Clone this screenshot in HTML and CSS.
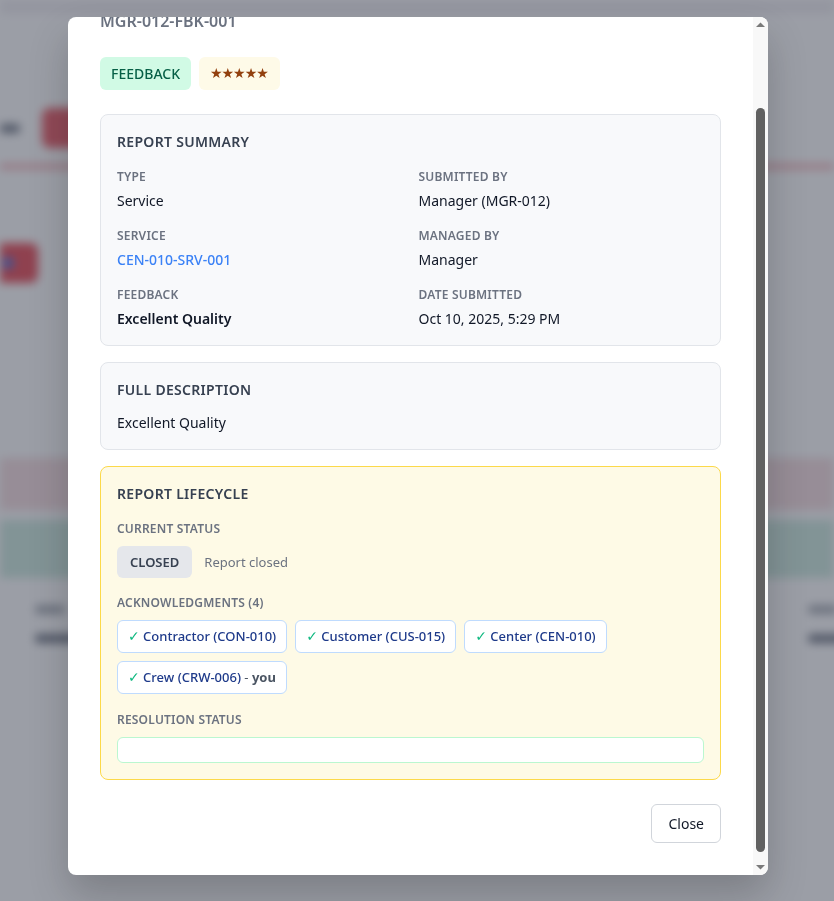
FILE: index.html
```html
<!DOCTYPE html>
<html lang="en">
<head>
<meta charset="utf-8">
<title>Report Details</title>
<link rel="stylesheet" href="styles.css">
</head>
<body>
<div class="page" aria-hidden="true">
  <div class="page-top"></div>
  <div class="page-toolbar"><span class="blob blob-label"></span><span class="page-btn"></span></div>
  <div class="page-rule"></div>
  <div class="page-fab"><span class="fab-dot"></span></div>
  <div class="page-band band-red"></div>
  <div class="page-band band-green"></div>
  <div class="page-stats">
    <div class="stat"><span class="blob short"></span><span class="blob"></span></div>
    <div class="stat"><span class="blob short"></span><span class="blob"></span></div>
  </div>
</div>

<div class="overlay">
  <div class="modal" role="dialog" aria-label="Report Details">
    <div class="modal-viewport">
      <div class="modal-body">
        <header class="modal-head">
          <h2 class="modal-title">Report Details</h2>
          <div class="report-id">MGR-012-FBK-001</div>
        </header>

        <div class="badges">
          <span class="badge badge-type">FEEDBACK</span>
          <span class="badge badge-stars">★★★★★</span>
        </div>

        <section class="card">
          <h3 class="card-title">REPORT SUMMARY</h3>
          <div class="summary-grid">
            <div class="field"><div class="label">TYPE</div><div class="value">Service</div></div>
            <div class="field"><div class="label">SUBMITTED BY</div><div class="value">Manager (MGR-012)</div></div>
            <div class="field"><div class="label">SERVICE</div><div class="value link">CEN-010-SRV-001</div></div>
            <div class="field"><div class="label">MANAGED BY</div><div class="value">Manager</div></div>
            <div class="field"><div class="label">FEEDBACK</div><div class="value strong">Excellent Quality</div></div>
            <div class="field"><div class="label">DATE SUBMITTED</div><div class="value">Oct 10, 2025, 5:29 PM</div></div>
          </div>
        </section>

        <section class="card">
          <h3 class="card-title desc-title">FULL DESCRIPTION</h3>
          <p class="desc">Excellent Quality</p>
        </section>

        <section class="card card-lifecycle">
          <h3 class="card-title">REPORT LIFECYCLE</h3>
          <div class="life-section">
            <div class="label">CURRENT STATUS</div>
            <div class="status-row">
              <span class="status-badge">CLOSED</span>
              <span class="status-note">Report closed</span>
            </div>
          </div>
          <div class="life-section ack-section">
            <div class="label">ACKNOWLEDGMENTS (4)</div>
            <div class="chips">
              <span class="chip"><span class="check">✓</span> Contractor (CON-010)</span>
              <span class="chip"><span class="check">✓</span> Customer (CUS-015)</span>
              <span class="chip"><span class="check">✓</span> Center (CEN-010)</span>
              <span class="chip"><span class="check">✓</span> Crew (CRW-006) <span class="you">- <b>you</b></span></span>
            </div>
          </div>
          <div class="life-section res-section">
            <div class="label">RESOLUTION STATUS</div>
            <div class="resolution-box"></div>
          </div>
        </section>

        <div class="actions">
          <button class="btn-close" type="button">Close</button>
        </div>
      </div>
    </div>

    <div class="scrollbar" aria-hidden="true">
      <svg class="sb-arrow" width="15" height="15" viewBox="0 0 15 15"><polygon points="3,10 12,10 7.5,5.5" fill="#7a7a7a"/></svg>
      <div class="sb-track"><div class="sb-thumb"></div></div>
      <svg class="sb-arrow" width="15" height="15" viewBox="0 0 15 15"><polygon points="3,5 12,5 7.5,9.5" fill="#7a7a7a"/></svg>
    </div>
  </div>
</div>
</body>
</html>
```

FILE: styles.css
```css
* { box-sizing: border-box; }

html, body {
  margin: 0;
  height: 901px;
  overflow: hidden;
}

body {
  font-family: "Noto Sans", "Segoe UI", "Open Sans", sans-serif;
  background: #ffffff;
  color: #111827;
}

/* ---------- blurred page behind the dialog ---------- */
.page {
  filter: blur(5px);
  display: flex;
  flex-direction: column;
}

.page-top {
  height: 14px;
  background: #f1eef2;
}

.page-toolbar {
  display: flex;
  align-items: center;
  gap: 22px;
  margin-top: 92px;
  height: 44px;
}

.blob {
  display: block;
  height: 9px;
  width: 60px;
  border-radius: 4px;
  background: #6b7280;
}

.blob-label { width: 20px; }

.page-btn {
  display: block;
  width: 160px;
  height: 40px;
  border-radius: 8px;
  background: #ea5560;
}

.page-rule {
  height: 5px;
  margin-top: 14px;
  background: #f3a6ad;
}

.page-fab {
  margin-top: 74px;
  width: 38px;
  height: 40px;
  border-radius: 0 8px 8px 0;
  background: #e74450;
  display: flex;
  align-items: center;
  padding-left: 2px;
}

.fab-dot {
  display: block;
  width: 12px;
  height: 12px;
  border-radius: 50%;
  background: #4f6fd8;
}

.page-band { height: 52px; }

.band-red {
  margin-top: 175px;
  background: #f6dde0;
}

.band-green {
  margin-top: 10px;
  height: 58px;
  background: #cdeadf;
}

.page-stats {
  display: flex;
  justify-content: space-between;
  padding: 27px 0 0 35px;
}

.stat {
  display: flex;
  flex-direction: column;
  gap: 20px;
  width: 60px;
}

.stat:last-child { width: 26px; }

.stat .short { width: 30px; background: #a3a8b0; }

/* ---------- overlay & modal ---------- */
.overlay {
  position: fixed;
  inset: 0;
  background: rgba(55, 62, 78, 0.5);
  display: flex;
  justify-content: center;
  align-items: flex-start;
  padding: 17px 0 0 2px;
}

.modal {
  width: 700px;
  height: 858px;
  background: #ffffff;
  border-radius: 8px;
  overflow: hidden;
  display: flex;
  box-shadow: 0 20px 40px rgba(0, 0, 0, 0.2);
}

.modal-viewport {
  flex: 1;
  min-width: 0;
  overflow: hidden;
  display: flex;
  flex-direction: column-reverse;
}

/* scrollbar */
.scrollbar {
  width: 15px;
  flex-shrink: 0;
  background: #f8f8f8;
  display: flex;
  flex-direction: column;
}

.sb-arrow {
  display: block;
  flex-shrink: 0;
}

.sb-track {
  flex: 1;
  padding-top: 76px;
}

.sb-thumb {
  width: 9px;
  height: 744px;
  margin-left: 3px;
  border-radius: 5px;
  background: #616161;
}

.modal-body {
  flex-shrink: 0;
  padding: 32px;
  display: flex;
  flex-direction: column;
}

.modal-head {
  display: flex;
  flex-direction: column;
  gap: 8px;
}

.modal-title {
  margin: 0;
  font-size: 22px;
  line-height: 32px;
  font-weight: 700;
  color: #111827;
}

.report-id {
  font-size: 16px;
  line-height: 24px;
  font-weight: 600;
  color: #6b7280;
}

/* ---------- badges ---------- */
.badges {
  display: flex;
  gap: 8px;
  margin-top: 24px;
}

.badge {
  display: inline-block;
  padding: 6px 12px;
  line-height: 21px;
  border-radius: 6px;
  font-size: 14px;
}

.badge-type {
  background: #d1fae5;
  color: #065f46;
  font-weight: 500;
  padding: 6px 11px;
}

.badge-stars {
  background: #fefae8;
  color: #92400e;
  font-size: 14px;
  letter-spacing: -1px;
  font-family: "DejaVu Sans", sans-serif;
  padding: 6px 12px 6px 11px;
}

/* ---------- cards ---------- */
.card {
  margin-top: 16px;
  background: #f8f9fb;
  border: 1px solid #e2e5ea;
  border-radius: 8px;
  padding: 16px;
}

.badges + .card { margin-top: 24px; }

.card-title {
  margin: 0 0 14px;
  font-size: 14px;
  line-height: 22px;
  font-weight: 600;
  letter-spacing: 0.3px;
  color: #374151;
}

.desc-title { margin-bottom: 12px; }

.summary-grid {
  display: grid;
  grid-template-columns: 1fr 1fr;
  column-gap: 16px;
  row-gap: 15px;
}

.label {
  font-size: 12px;
  line-height: 20px;
  font-weight: 600;
  letter-spacing: 0.2px;
  color: #6b7280;
}

.value {
  margin-top: 4px;
  font-size: 14px;
  line-height: 20px;
  color: #111827;
}

.value.link {
  color: #3b82f6;
  font-weight: 500;
}

.value.strong { font-weight: 600; }

.desc {
  margin: 0;
  font-size: 14px;
  line-height: 20px;
  color: #111827;
}

/* ---------- lifecycle ---------- */
.card-lifecycle {
  background: #fefae6;
  border-color: #fcd94a;
}

.life-section {
  display: flex;
  flex-direction: column;
  gap: 7px;
}

.ack-section { margin-top: 15px; }
.res-section { margin-top: 16px; }

.status-row {
  display: flex;
  align-items: center;
  gap: 12px;
}

.status-badge {
  display: inline-block;
  padding: 6px 13px;
  line-height: 20px;
  border-radius: 6px;
  background: #e5e7eb;
  color: #374151;
  font-size: 13px;
  font-weight: 600;
}

.status-note {
  font-size: 13px;
  color: #6b7280;
}

.chips {
  display: flex;
  flex-wrap: wrap;
  gap: 8px;
}

.chip {
  display: inline-block;
  padding: 6px 10px;
  line-height: 19px;
  background: #ffffff;
  border: 1px solid #bfdbfe;
  border-radius: 6px;
  font-size: 13px;
  font-weight: 500;
  color: #1e3a8a;
}

.check {
  color: #10b981;
  font-family: "DejaVu Sans", sans-serif;
  font-size: 14px;
}

.you {
  color: #4b5563;
  font-weight: 400;
}

.you b { font-weight: 700; }

.resolution-box {
  height: 26px;
  background: #ffffff;
  border: 1px solid #bbf7d0;
  border-radius: 6px;
}

/* ---------- footer ---------- */
.actions {
  display: flex;
  justify-content: flex-end;
  margin-top: 24px;
}

.btn-close {
  font-family: inherit;
  font-size: 14px;
  line-height: 19px;
  color: #111827;
  background: #ffffff;
  border: 1px solid #d1d5db;
  border-radius: 6px;
  padding: 9px 16px;
}
```
